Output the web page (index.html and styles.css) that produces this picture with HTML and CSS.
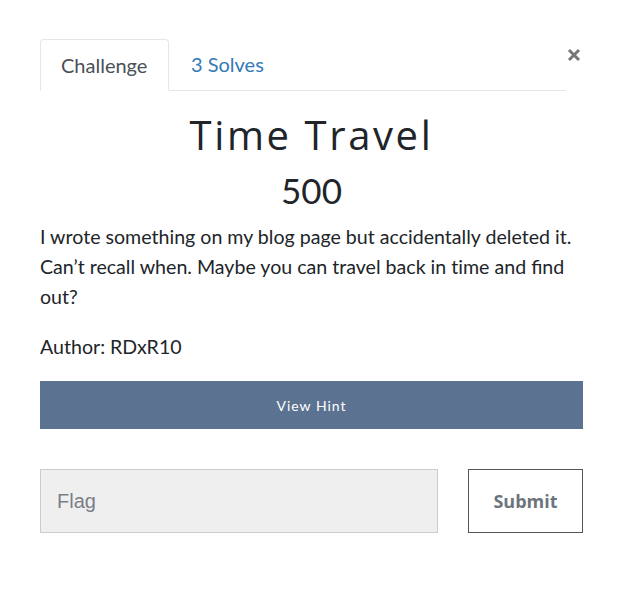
FILE: index.html
```html
<!DOCTYPE html>
<html>
<head>
<meta charset="utf-8">
<link rel="stylesheet" href="styles.css">
</head>
<body>
<div class="modal">
  <div class="header">
    <div class="tabs">
      <div class="tab active">Challenge</div>
      <div class="tab link">3 Solves</div>
    </div>
    <div class="close">
      <svg width="14" height="14" viewBox="0 0 14 14"><path d="M2 2 L12 12 M12 2 L2 12" stroke="#777" stroke-width="3" stroke-linecap="butt"/></svg>
    </div>
  </div>
  <h1 class="title">Time Travel</h1>
  <h2 class="value">500</h2>
  <p class="desc">I wrote something on my blog page but accidentally deleted it. Can’t recall when. Maybe you can travel back in t&zwnj;ime and find out?</p>
  <p class="author">Author: RDxR10</p>
  <button class="hint">View Hint</button>
  <div class="submit-row">
    <input class="flag" type="text" placeholder="Flag">
    <button class="submit">Submit</button>
  </div>
</div>
</body>
</html>
```
FILE: styles.css
```css
html, body { margin: 0; padding: 0; background: #fff; }
body { font-family: Lato, "Noto Sans", sans-serif; color: #212529; }
.modal { padding: 39px 39px 0 40px; width: 543px; }
.header { display: flex; align-items: flex-start; }
.tabs { width: 526px; display: flex; border-bottom: 1px solid #e3e6ea; height: 51px; }
.tab { font-size: 20px; line-height: 53px; box-sizing: border-box; }
.tab.active { border: 1px solid #e3e6ea; border-bottom-color: #fff; border-radius: 4px 4px 0 0; height: 52px; color: #495057; width: 129px; padding: 0 0 0 20px; line-height: 51px; }
.tab.link { color: #337ab7; padding-left: 22px; line-height: 51px; }
.close { margin-left: 1px; margin-top: 9px; display: flex; }
.title { font-family: "Open Sans", sans-serif; font-weight: 400; font-size: 40px; text-align: center; margin: 20px 0 0; line-height: 48px; letter-spacing: 2.6px; color: #212529; }
.value { font-family: Lato, sans-serif; font-weight: 400; font-size: 35px; text-align: center; margin: 9px 0 0; line-height: 44px; color: #212529; }
.desc { font-size: 19.6px; line-height: 30px; margin: 10px 0 0; }
.author { font-size: 19.6px; line-height: 30px; margin: 20px 0 0; }
.hint { display: block; width: 100%; height: 48px; margin-top: 19px; background: #5b7290; color: #fff; border: 0; font-family: Lato, sans-serif; font-size: 14px; letter-spacing: 1px; padding: 0; }
.submit-row { display: flex; justify-content: space-between; margin-top: 40px; }
.flag { width: 398px; height: 64px; box-sizing: border-box; background: #efefef; border: 1px solid #ccc; padding: 0 16px; font-family: "Liberation Sans", Arial, sans-serif; font-size: 20px; color: #495057; outline: none; }
.flag::placeholder { color: #7a7f86; }
.submit { width: 115px; height: 64px; box-sizing: border-box; background: #fff; border: 1px solid #555; font-family: "Open Sans", sans-serif; font-weight: 700; font-size: 18px; color: #6c757d; padding: 0; }
```
